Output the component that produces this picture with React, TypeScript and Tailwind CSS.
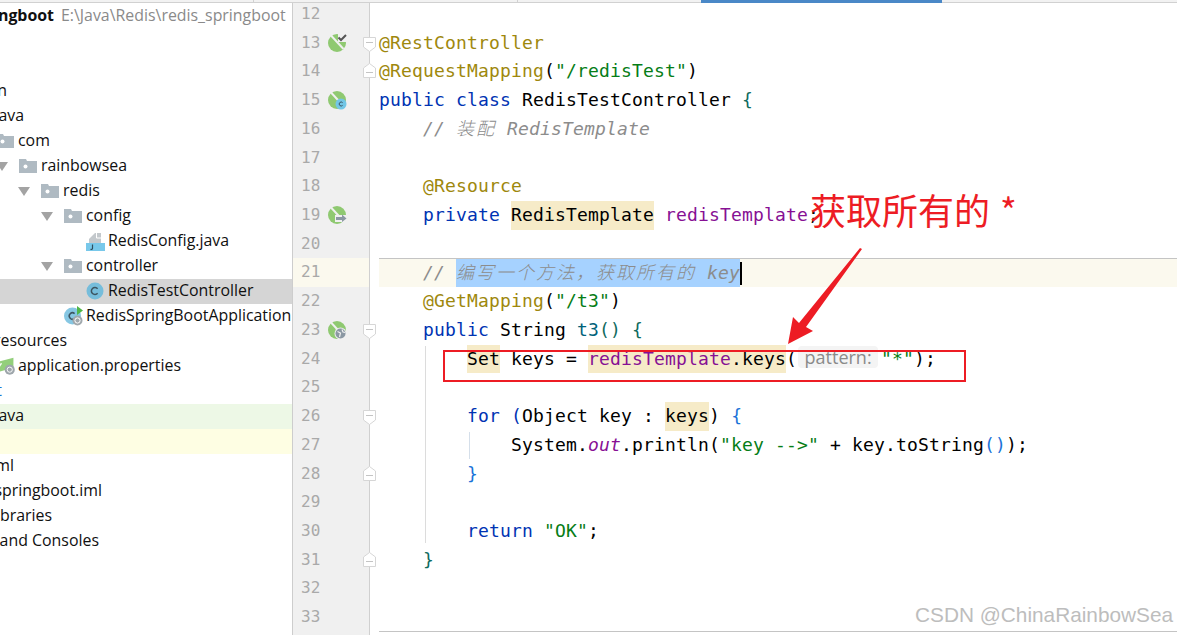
import React from 'react';

const Caret = () => (
  <svg width="12" height="9" viewBox="0 0 12 9"><path d="M0 0H12L6 9Z" fill="#a3a3a3" /></svg>
);

const Folder = () => (
  <svg width="18" height="14" viewBox="0 0 18 14">
    <path d="M0 0H7L8 2H18V14H0Z" fill="#afbac2" />
    <circle cx="6.5" cy="7.5" r="2" fill="#fff" />
  </svg>
);

const JavaFile = () => (
  <svg width="19" height="19" viewBox="0 0 19 19">
    <path d="M9 1H15V11H3V7Z" fill="#c3c8cc" />
    <path d="M10.5 1V6H15" fill="none" stroke="#fff" strokeWidth="1" />
    <rect y="11" width="19" height="8" fill="#78c8ea" />
    <path d="M6.5 12.5V16.5Q6.5 17.7 4.5 17.4" fill="none" stroke="#2f4d5e" strokeWidth="1.2" />
  </svg>
);

const ClassIcon = () => (
  <svg width="18" height="18" viewBox="0 0 18 18">
    <circle cx="9" cy="9" r="8.5" fill="#76bddb" />
    <path d="M11.6 6.8A3.5 3.5 0 1 0 11.6 11.2" fill="none" stroke="#3c5460" strokeWidth="1.5" />
  </svg>
);

const BootClassIcon = () => (
  <svg width="20" height="20" viewBox="0 0 20 20">
    <circle cx="8.5" cy="10" r="8.5" fill="#86c7e3" />
    <path d="M10.6 7.6A3.2 3.2 0 1 0 10.6 12.4" fill="none" stroke="#3c5460" strokeWidth="1.5" />
    <path d="M13 0L19 4.5L13 9Z" fill="#4fb648" />
    <circle cx="13.5" cy="14.5" r="5" fill="#a0a8ad" />
    <circle cx="13.5" cy="14.5" r="2.6" fill="none" stroke="#fff" strokeWidth="1" />
  </svg>
);

const PropsIcon = () => (
  <svg width="24" height="20" viewBox="0 0 24 20">
    <path d="M4 5L19 1V12L4 16Z" fill="#93cf7b" />
    <path d="M1 14L6 7" stroke="#fff" strokeWidth="1.5" />
    <circle cx="15" cy="14" r="5.5" fill="#9ea6ab" />
    <circle cx="15" cy="14" r="2.8" fill="none" stroke="#fff" strokeWidth="1" />
  </svg>
);

const tree = [
  { end: 'w-[54px]', text: 'redis_springboot', bold: true, path: 'E:\\Java\\Redis\\redis_springboot' },
  {},
  {},
  { end: 'w-[7px]', text: 'main' },
  { end: 'w-[24px]', text: 'java' },
  { ml: 'ml-[-27px]', icon: <Folder />, text: 'com' },
  { ml: 'ml-[-4px]', caret: true, icon: <Folder />, text: 'rainbowsea' },
  { ml: 'ml-[18px]', caret: true, icon: <Folder />, text: 'redis' },
  { ml: 'ml-[41px]', caret: true, icon: <Folder />, text: 'config' },
  { ml: 'ml-[63px]', icon: <JavaFile />, text: 'RedisConfig.java' },
  { ml: 'ml-[41px]', caret: true, icon: <Folder />, text: 'controller' },
  { ml: 'ml-[63px]', icon: <ClassIcon />, text: 'RedisTestController', bg: 'bg-[#d5d5d5]' },
  { ml: 'ml-[41px]', icon: <BootClassIcon />, text: 'RedisSpringBootApplication' },
  { end: 'w-[67px]', text: 'resources' },
  { ml: 'ml-[-27px]', icon: <PropsIcon />, text: 'application.properties' },
  { end: 'w-[2px]', text: 'target', color: 'text-[#1b76d2]' },
  { end: 'w-[24px]', text: 'java', bg: 'bg-[#edf8e6]' },
  { bg: 'bg-[#fefee3]' },
  { end: 'w-[14px]', text: 'pom.xml' },
  { end: 'w-[102px]', text: 'redis_springboot.iml' },
  { end: 'w-[52px]', text: 'External Libraries' },
  { end: 'w-[99px]', text: 'Scratches and Consoles' },
];

const Sidebar = () => (
  <div className="w-[293px] shrink-0 overflow-hidden border-r border-[#cdcdcd] bg-white pt-px font-['Open_Sans',sans-serif] text-[15.9px] text-[#101010]">
    {tree.map((row, i) => (
      <div key={i} className={`flex h-[25px] items-center whitespace-nowrap ${row.bg ?? ''}`}>
        {row.end ? (
          <div className={`mb-px flex shrink-0 justify-end ${row.end} ${row.color ?? ''} ${row.bold ? 'font-bold' : ''}`}>
            <span className="shrink-0">{row.text}</span>
          </div>
        ) : row.text ? (
          <div className={`flex shrink-0 items-center ${row.ml}`}>
            <span className="flex w-[23px] shrink-0 items-center">{row.caret && <Caret />}</span>
            <span className="flex w-[22px] shrink-0 items-center">{row.icon}</span>
            <span className="mb-px">{row.text}</span>
          </div>
        ) : null}
        {row.path && <span className="mb-px ml-[7px] text-[#8a8a8a]">{row.path}</span>}
      </div>
    ))}
  </div>
);

const SpringBase = () => (
  <>
    <circle cx="9" cy="9" r="9" fill="#8fc971" />
    <path d="M3 1.5L15.5 15" stroke="#f0f0f0" strokeWidth="2" />
  </>
);

const SpringCheck = () => (
  <svg width="19" height="19" viewBox="0 0 19 19">
    <SpringBase />
    <path d="M10 0H19V8H10Z" fill="#f0f0f0" />
    <path d="M10.5 3.5L13 6L18 1" fill="none" stroke="#555" strokeWidth="2" />
  </svg>
);

const SpringClass = () => (
  <svg width="19" height="19" viewBox="0 0 19 19">
    <SpringBase />
    <circle cx="13" cy="13" r="5.5" fill="#72c6e6" />
    <path d="M14.6 11.6A2 2 0 1 0 14.6 14.4" fill="none" stroke="#3c5460" strokeWidth="1" />
  </svg>
);

const SpringArrow = () => (
  <svg width="19" height="19" viewBox="0 0 19 19">
    <SpringBase />
    <path d="M7 9H19V16H7Z" fill="#f0f0f0" />
    <path d="M8 11H14V8.5L18.5 12.5L14 16V14H8Z" fill="#8b98a3" />
  </svg>
);

const SpringGlobe = () => (
  <svg width="19" height="19" viewBox="0 0 19 19">
    <SpringBase />
    <circle cx="12.5" cy="12.5" r="6" fill="#f0f0f0" />
    <circle cx="12.5" cy="12.5" r="5" fill="#8b98a3" />
    <path d="M9.5 10.5L12.5 12L11.5 16M14 8.5L15 11L17 11.5" fill="none" stroke="#f0f0f0" strokeWidth="1.2" />
  </svg>
);

const FoldOpen = () => (
  <svg width="13" height="15" viewBox="0 0 13 15" className="absolute left-[70px] top-[8px]">
    <path d="M.5.5H12.5V10L6.5 14.5L.5 10Z" fill="#fff" stroke="#d6d6d6" />
    <path d="M3 5.5H10" stroke="#c4c4c4" />
  </svg>
);

const FoldClose = () => (
  <svg width="13" height="15" viewBox="0 0 13 15" className="absolute left-[70px] top-[6px]">
    <path d="M.5 14.5H12.5V5L6.5.5L.5 5Z" fill="#fff" stroke="#d6d6d6" />
    <path d="M3 9.5H10" stroke="#c4c4c4" />
  </svg>
);

const Kw = ({ children }: { children: React.ReactNode }) => <span className="text-[#0033b3]">{children}</span>;
const Ann = ({ children }: { children: React.ReactNode }) => <span className="text-[#9e880d]">{children}</span>;
const Str = ({ children }: { children: React.ReactNode }) => <span className="text-[#067d17]">{children}</span>;
const Fld = ({ children }: { children: React.ReactNode }) => <span className="text-[#871094]">{children}</span>;
const Brace = ({ children }: { children: React.ReactNode }) => <span className="text-[#0f6b5e]">{children}</span>;
const Mark = ({ children }: { children: React.ReactNode }) => (
  <span className="inline-block h-[28.72px] bg-[#f6ebc8]">{children}</span>
);
const Cjk = ({ children }: { children: React.ReactNode }) => (
  <span className="font-['Noto_Sans_CJK_SC',sans-serif] text-[18px] font-light leading-none tracking-[2px]">{children}</span>
);

const lines: { n: number; icon?: React.ReactNode; fold?: React.ReactNode; active?: boolean; code?: React.ReactNode }[] = [
  { n: 12 },
  { n: 13, icon: <SpringCheck />, fold: <FoldOpen />, code: <Ann>@RestController</Ann> },
  {
    n: 14,
    fold: <FoldClose />,
    code: (
      <>
        <Ann>@RequestMapping</Ann>(<Str>"/redisTest"</Str>)
      </>
    ),
  },
  {
    n: 15,
    icon: <SpringClass />,
    code: (
      <>
        <Kw>public class</Kw> RedisTestController <Brace>{'{'}</Brace>
      </>
    ),
  },
  {
    n: 16,
    code: (
      <span className="italic text-[#8c8c8c]">
        {'    // '}
        <Cjk>装配</Cjk> RedisTemplate
      </span>
    ),
  },
  { n: 17 },
  { n: 18, code: <>{'    '}<Ann>@Resource</Ann></> },
  {
    n: 19,
    icon: <SpringArrow />,
    code: (
      <>
        {'    '}
        <Kw>private</Kw> <Mark>RedisTemplate</Mark> <Fld>redisTemplate</Fld>;
      </>
    ),
  },
  { n: 20 },
  {
    n: 21,
    active: true,
    code: (
      <span className="italic text-[#8c8c8c]">
        {'    // '}
        <span className="inline-block h-[27.72px] bg-[#a6d2ff] align-top">
          <Cjk>编写一个方法，获取所有的</Cjk> key
        </span>
        <span className="mt-[3px] inline-block h-[23px] w-[2px] bg-black align-top" />
      </span>
    ),
  },
  {
    n: 22,
    code: (
      <>
        {'    '}
        <Ann>@GetMapping</Ann>(<Str>"/t3"</Str>)
      </>
    ),
  },
  {
    n: 23,
    icon: <SpringGlobe />,
    fold: <FoldOpen />,
    code: (
      <>
        {'    '}
        <Kw>public</Kw> String <span className="text-[#00627a]">t3</span><Brace>() {'{'}</Brace>
      </>
    ),
  },
  {
    n: 24,
    code: (
      <>
        {'        '}
        <Mark>Set</Mark> keys = <Mark><Fld>redisTemplate</Fld>.keys</Mark>(
        <span className="ml-[1px] mr-[3px] inline-flex h-[22px] w-[80px] items-center justify-center rounded-[4px] bg-[#f4f4f4] align-[1px] font-['Open_Sans',sans-serif] text-[18px] tracking-normal text-[#8a8a8a]">
          pattern:
        </span>
        <Str>"*"</Str>);
      </>
    ),
  },
  { n: 25 },
  {
    n: 26,
    fold: <FoldOpen />,
    code: (
      <>
        {'        '}
        <Kw>for</Kw> <span className="text-[#0033b3]">(</span>Object key : <Mark>keys</Mark>){' '}
        <span className="text-[#1a73d8]">{'{'}</span>
      </>
    ),
  },
  {
    n: 27,
    code: (
      <>
        {'            '}System.<span className="italic text-[#871094]">out</span>.println(<Str>"key --&gt;"</Str> + key.toString
        <span className="text-[#1a73d8]">()</span>);
      </>
    ),
  },
  { n: 28, fold: <FoldClose />, code: <>{'        '}<span className="text-[#1a73d8]">{'}'}</span></> },
  { n: 29 },
  {
    n: 30,
    code: (
      <>
        {'        '}
        <Kw>return</Kw> <Str>"OK"</Str>;
      </>
    ),
  },
  { n: 31, fold: <FoldClose />, code: <>{'    '}<Brace>{'}'}</Brace></> },
  { n: 32 },
  { n: 33 },
];

const Editor = () => (
  <div className="relative min-w-0 flex-1 overflow-hidden bg-white font-['DejaVu_Sans_Mono','Noto_Sans_CJK_SC',monospace] text-[18px] tracking-[0.164px] text-black">
    <div className="absolute bottom-0 left-0 top-0 w-[77px] border-r border-[#d0d0d0] bg-[#f0f0f0]" />
    <div className="relative mt-[-3px]">
      {lines.map(line => (
        <div key={line.n} className="relative flex h-[28.72px] leading-[28.72px]">
          <div
            className={`flex w-[76px] shrink-0 items-center pl-[8px] ${line.active ? 'bg-[#fbf9ee]' : ''}`}
          >
            <span className="w-[27px] shrink-0 text-[16px] tracking-normal text-[#a9a9a9]">{line.n}</span>
            <span className="flex w-[19px] shrink-0 items-center">{line.icon}</span>
          </div>
          <div
            className={`ml-[10px] min-w-0 flex-1 whitespace-pre ${line.active ? 'border-t border-[#c4c4c4] bg-[#fbf9ee] leading-[27.72px]' : ''}`}
          >
            {line.code}
          </div>
          {line.fold}
        </div>
      ))}
      <div className="absolute left-[132px] top-[346px] h-[197px] w-px bg-[#dcdcdc]" />
      <div className="absolute left-[176px] top-[432px] h-[27px] w-px bg-[#d5dfea]" />
    </div>
    <div className="absolute bottom-[3px] left-[86px] right-0 h-px bg-[#c4c4c4]" />
  </div>
);

export default function App() {
  return (
    <div className="relative flex h-[635px] w-[1177px] flex-col overflow-hidden bg-white">
      <div className="flex h-[3px] shrink-0 border-b border-[#d1d1d1] bg-[#f2f2f2]">
        <div className="w-[254px] border-r border-[#d1d1d1]" />
        <div className="w-[264px] border-r border-[#d1d1d1]" />
        <div className="w-[183px]" />
        <div className="h-[3px] w-[241px] bg-[#4a88c7]" />
      </div>
      <div className="flex min-h-0 flex-1">
        <Sidebar />
        <Editor />
      </div>

      <div className="absolute left-[810px] top-[182px] font-['Noto_Sans_CJK_SC',sans-serif] text-[36px] leading-[54px] whitespace-pre text-[#ed1c24]">
        获取所有的<span className="ml-[2px]"> *</span>
      </div>
      <div className="absolute left-[443px] top-[350px] h-[32px] w-[523px] border-2 border-[#ed1c24]" />
      <svg width="1177" height="635" className="pointer-events-none absolute left-0 top-0">
        <path d="M788 344L793 317L799 323L860 248L862 249L806 327L813 331Z" fill="#ed1c24" />
      </svg>
      <div className="absolute left-[915px] top-[602px] font-['Liberation_Sans',sans-serif] text-[20.8px] leading-[26px] text-[#bdbdbd] [text-shadow:1px_1px_0_#fff]">
        CSDN @ChinaRainbowSea
      </div>
    </div>
  );
}
